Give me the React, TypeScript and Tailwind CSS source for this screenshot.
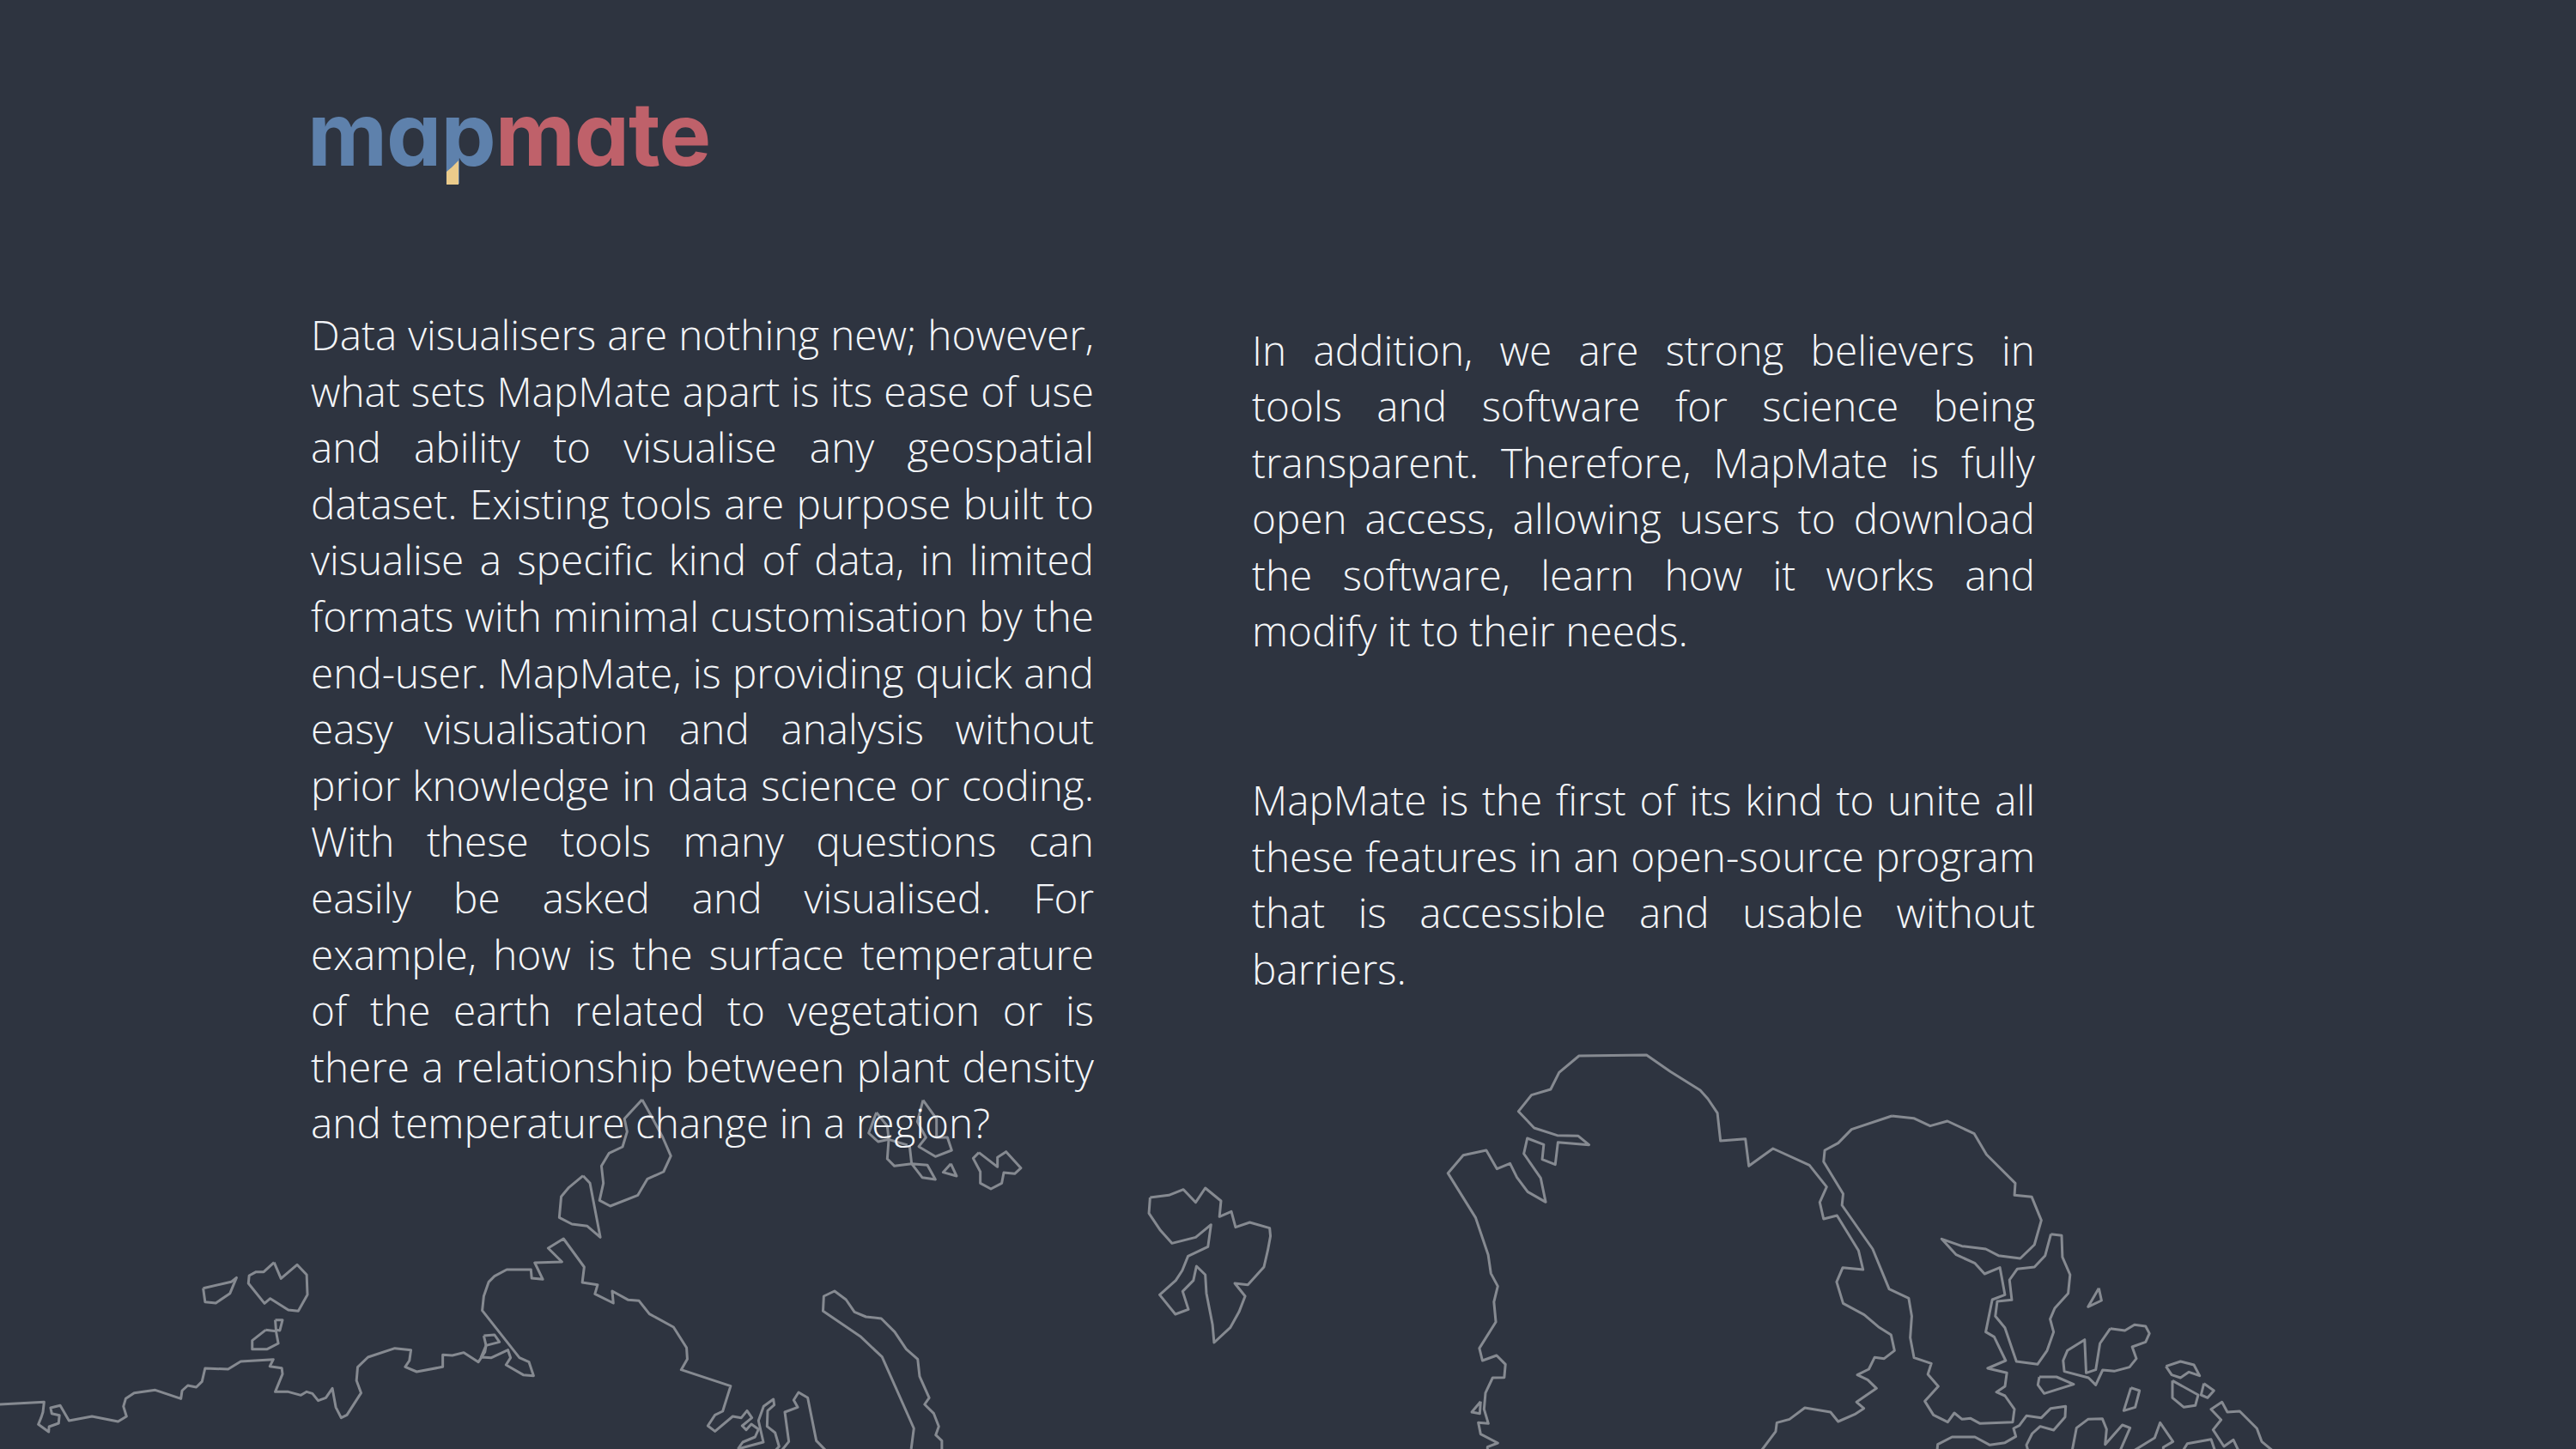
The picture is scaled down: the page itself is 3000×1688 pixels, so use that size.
const z = (x0: number, y0: number, sx: number, sy: number, s: string): number[][] =>
  s.trim().split(/\s+/).map((p) => {
    const [a, b] = p.split(",").map(Number);
    return [x0 + a / sx, y0 + b / sy];
  });
const Z2 = (s: string) => z(0, 1280, 2.24, 3, s);
const Z3 = (s: string) => z(600, 1280, 2.24, 3, s);
const Z4 = (s: string) => z(1280, 1200, 2.24, 3, s);
const Z5 = (s: string) => z(1980, 1280, 2.24, 3, s);
const Z7 = (s: string) => z(1000, 1270, 3, 3, s);
const Z8 = (s: string) => z(820, 1600, 3, 3, s);
const Z9 = (s: string) => z(2240, 1600, 3, 3, s);
const Z10 = (s: string) => z(1680, 1600, 3, 3, s);

const lines: number[][][] = [
  [
    ...Z2("0,1068 115,1060 112,1095 108,1112 100,1138 127,1164 128,1146 153,1134 155,1106 135,1100 132,1080 157,1072 180,1125 240,1110 308,1128 330,1110 322,1075 328,1048 350,1028 405,1018 472,1048 475,1020 490,1002 512,1008 527,988 535,942 595,945 628,918 713,911 704,935 735,941 737,962 718,1024 752,1024 785,1036 800,1024 815,1030 830,1055 850,1045 867,1012 876,1078 890,1115 905,1105 942,1028 930,985 933,938 960,903 1030,872 1072,878 1068,915 1057,937 1087,954 1155,937 1155,895 1180,897 1210,887 1248,920 1265,885 1268,862 1255,903 1282,905 1325,878 1332,905 1320,930 1365,965 1392,968 1380,920 1355,905 1258,740 1262,690 1275,640 1290,620 1322,597 1385,597 1387,627 1416,631 1395,573 1466,570 1430,522 1470,489"),
    ...Z3("180,588 175,642 215,650 208,682 256,714 253,672 295,703 323,706 350,752 413,798 447,870 449,910 433,947 562,1004"),
    ...Z8("65,132 38,145 13,183 38,202 100,150 130,155 150,130 167,155 133,183 147,197 165,177 190,195 178,222 135,240 118,264"),
  ],
  Z8("118,264 207,240 190,165 208,115 242,90 245,110 222,130 220,185 248,207 262,255 250,268"),
  Z8("272,268 296,238 282,135 327,118 313,93 330,66 362,85 392,235 424,268"),
  Z2("1262,828 1290,825 1303,850 1268,862 1262,828"),
  Z2("530,662 603,640 617,625 600,680 563,714 535,710 530,662"),
  Z2("715,572 733,628 775,580 800,615 802,685 778,742 752,738 705,698 690,715 648,645 650,618 668,605 688,605 715,572"),
  Z2("718,773 737,773 730,810 720,808 718,773"),
  Z2("693,808 720,812 726,855 697,875 658,875 658,845 693,808"),
  Z3("331,3 285,70 292,115 280,168 245,190 225,235 230,295 220,355 248,375 320,337 345,280 387,255 406,200 385,135 355,60 331,3"),
  Z3("177,269 140,310 120,342 115,415 148,438 188,445 222,484 195,295 177,269"),
  Z3("1033,1224 1040,1152 957,902 900,830 803,742 805,690 833,672 863,702 885,745 915,762 955,768 990,815 1020,875 1050,910 1055,970 1080,1045 1068,1068 1092,1100 1105,1145 1097,1175 1113,1195 1113,1224"),
  Z7("62,78 35,150 68,180 105,172 170,192"),
  Z7("62,78 100,125 105,172 100,240 125,265 185,257 178,195"),
  Z7("185,257 240,262 268,312 222,305 185,257"),
  Z7("225,35 205,110 235,165 210,197 268,232 325,210 310,165 272,165 272,100 225,35"),
  Z7("322,257 295,287 342,300 322,257"),
  Z7("420,218 400,238 425,285 425,325 462,345 500,325 507,288 545,292 567,272 515,215 485,235 485,268 420,218"),
  Z4("133,585 182,577 220,557 252,602 277,552 318,597 314,652 345,634 356,689 393,672 445,692 447,720 440,770 430,828 388,890 354,885 381,930 365,985 342,1040 300,1092 296,1030 280,920 277,855 254,825 246,875 218,913 233,976 199,993 158,925 200,875 217,840 232,790 284,757 292,680 252,724 190,745 160,700 130,640 133,585"),
  [
    ...Z10("1115,268"),
    ...Z5("197,1163 200,1132 233,1120 273,1080 340,1095 360,1128 403,1103 427,1082 408,1060 460,1012 437,982 410,965 440,945 455,904 480,908 507,880 498,825 465,797 428,755 373,715 356,640 372,590 425,597 413,530 357,408 322,420 312,362 330,308 285,232 190,174 127,235 118,140 53,147 45,50 20,0"),
    ...Z4("1568,210 1490,145 1428,87 1252,90 1200,148 1178,207 1128,227 1094,284 1135,342 1195,368 1250,370 1278,401 1197,392 1190,470 1156,452 1160,400 1117,378 1108,432 1152,517 1165,601 1118,565 1090,515 1072,466 1038,485 1010,420 950,437 910,500 982,655 1015,785 1022,850 1040,895 1030,950 1035,1020 992,1112 1000,1155 1037,1137 1060,1168 1057,1214"),
    ...Z10("175,15 150,68 145,125 160,175 125,172 133,212 193,243 157,257 157,268"),
  ],
  Z10("133,98 102,135 130,140 133,98"),
  [
    ...Z5("500,60 557,68 600,95 645,78 715,122 747,195 822,295 820,337 865,343 890,425 872,510 835,558 778,548 745,525 683,515 630,490 668,545 717,575 742,612 782,590 795,685 762,702 745,815 767,832 797,915 750,942 800,958"),
    ...Z9("285,45 255,65 285,78 318,125 312,170 198,175 165,157 135,160 108,138 85,170 35,145 5,97 52,45"),
    ...Z5("594,963 603,925 558,905 548,835 552,760 544,697 493,665 450,525 370,372 373,332 322,220 325,180 360,155 395,107 500,60"),
  ],
  Z5("915,473 943,478 945,553 965,615 960,680 925,732 913,770 922,815 905,880 880,928 825,918 795,800 770,760 775,708 813,703 807,633 827,595 872,588 900,548 915,473"),
  Z5("1040,662 1012,727 1047,705 1040,662"),
  Z5("1070,803 1108,810 1133,790 1162,795 1172,820 1162,850 1127,867 1138,908 1120,938 1080,952 1050,948 1032,1000 1013,975 950,953 947,915 958,880 1003,842 1007,958 1032,947 1043,855 1070,803"),
  Z9("405,12 465,12 525,38 422,70 400,40 405,12"),
  Z9("725,50 755,60 740,118 700,130 725,50"),
  Z5("1215,935 1253,918 1288,930 1303,968 1275,955 1253,975 1230,965 1215,935"),
  Z9("870,25 960,75 950,112 910,118 870,85 870,25"),
  Z9("980,35 1015,60 993,85 970,75 980,35"),
  Z9("1100,268 1083,232 1050,255 1012,197 1040,162 1005,125 1043,100 1062,135 1105,132 1165,192 1182,238 1218,268"),
  Z9("365,268 360,250 380,210 408,185 455,198 495,152 497,115 445,122 412,155 360,148 335,182 315,192 323,220 285,242 232,250 180,222 100,222 50,248 48,268"),
  Z9("520,268 535,190 575,160 625,158 640,195 635,248 695,180 722,190 688,268"),
  Z9("738,268 808,225 827,172 872,238 838,258 838,268"),
  Z9("908,268 922,245 1005,230 1018,268"),
];

function WorldMap() {
  return (
    <svg viewBox="0 0 3000 1688" className="absolute inset-0 w-[3000px] h-[1688px]" fill="none">
      {lines.map((pts, i) => (
        <polyline
          key={i}
          points={pts.map((p) => p.join(",")).join(" ")}
          stroke="#868a91"
          strokeWidth={3}
          strokeLinejoin="round"
        />
      ))}
    </svg>
  );
}

function Logo() {
  return (
    <div className="relative -ml-[4px] w-fit font-['Inter',sans-serif] font-bold text-[102px] leading-[120px] tracking-[-1px] [font-feature-settings:'cv11']">
      <span className="text-[#5e81ac]">map</span>
      <span className="text-[#bf616a]">mate</span>
      <svg viewBox="0 0 14 28" className="absolute left-[162px] top-[91px] w-[14px] h-[28px]">
        <polygon points="0,13 6,8 14,0 14,28 0,28" fill="#ebcb8b" />
      </svg>
    </div>
  );
}

export default function App() {
  return (
    <div className="relative w-[3000px] h-[1688px] overflow-hidden bg-[#2e3440] text-[#f4f6f9] font-['Open_Sans',sans-serif] font-light text-[47.7px] leading-[65.6px]">
      <WorldMap />
      <div className="relative flex flex-col pl-[362px] pt-[96px]">
        <Logo />
        <div className="flex gap-[184px] mt-[141px]">
          <p className="w-[912px] text-justify">
            Data visualisers are nothing new; however, what sets MapMate apart is its ease of use and ability to visualise any geospatial dataset. Existing tools are purpose built to visualise a specific kind of data, in limited formats with minimal customisation by the end-user. MapMate, is providing quick and easy visualisation and analysis without prior knowledge in data science or coding. With these tools many questions can easily be asked and visualised. For example, how is the surface temperature of the earth related to vegetation or is there a relationship between plant density and temperature change in a region?
          </p>
          <div className="w-[912px] pt-[17.5px] flex flex-col gap-[131px]">
            <p className="text-justify">
              In addition, we are strong believers in tools and software for science being transparent. Therefore, MapMate is fully open access, allowing users to download the software, learn how it works and modify it to their needs.
            </p>
            <p className="text-justify">
              MapMate is the first of its kind to unite all these features in an open-source program that is accessible and usable without barriers.
            </p>
          </div>
        </div>
      </div>
    </div>
  );
}
